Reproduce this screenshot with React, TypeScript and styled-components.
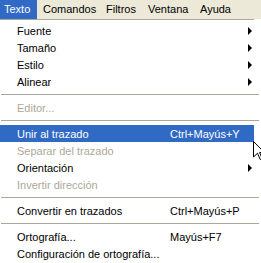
import React from "react";
import styled, { createGlobalStyle } from "styled-components";

const Global = createGlobalStyle`
  html, body { margin: 0; padding: 0; background: #fff; }
  body {
    font-family: Tahoma, "Liberation Sans", Arial, sans-serif;
    font-size: 11px;
    -webkit-font-smoothing: none;
  }
`;

const Screen = styled.div`
  position: relative;
  width: 261px;
  height: 263px;
  overflow: hidden;
  background: #fff;
`;

const MenuBar = styled.div`
  display: flex;
  height: 19px;
  background: #ece9d8;
`;

const BarItem = styled.div<{ $active?: boolean; $w: number }>`
  display: flex;
  align-items: center;
  width: ${(p) => p.$w}px;
  padding-left: ${(p) => (p.$active ? 4 : 6)}px;
  box-sizing: border-box;
  color: ${(p) => (p.$active ? "#fff" : "#000")};
  background: ${(p) => (p.$active ? "#316ac5" : "transparent")};
  line-height: 19px;
  white-space: nowrap;
`;

const Panel = styled.div`
  border-top: 1px solid #aca899;
  padding-top: 2px;
  width: 254px;
`;

const Row = styled.div<{ $hi?: boolean; $off?: boolean }>`
  display: grid;
  grid-template-columns: 152px 1fr 10px;
  align-items: center;
  height: 17px;
  padding-left: 17px;
  color: ${(p) => (p.$hi ? "#fff" : p.$off ? "#aca899" : "#000")};
  background: ${(p) => (p.$hi ? "#316ac5" : "transparent")};
  white-space: nowrap;
`;

const Shortcut = styled.span`
  padding-left: 1px;
`;

const Arrow = styled.span`
  width: 0;
  height: 0;
  border-top: 4px solid transparent;
  border-bottom: 4px solid transparent;
  border-left: 4px solid #000;
  margin-left: 4px;
`;

const Sep = styled.div`
  height: 9px;
  display: flex;
  align-items: center;
  padding-left: 1px;
  width: 258px;
  &::before {
    content: "";
    display: block;
    width: 100%;
    height: 1px;
    background: #aca899;
  }
`;

const Cursor = styled.svg`
  position: absolute;
  left: 253px;
  top: 141px;
`;

type Item =
  | { sep: true }
  | { label: string; shortcut?: string; sub?: boolean; off?: boolean; hi?: boolean; sep?: false };

const items: Item[] = [
  { label: "Fuente", sub: true },
  { label: "Tamaño", sub: true },
  { label: "Estilo", sub: true },
  { label: "Alinear", sub: true },
  { sep: true },
  { label: "Editor...", off: true },
  { sep: true },
  { label: "Unir al trazado", shortcut: "Ctrl+Mayús+Y", hi: true },
  { label: "Separar del trazado", off: true },
  { label: "Orientación", sub: true },
  { label: "Invertir dirección", off: true },
  { sep: true },
  { label: "Convertir en trazados", shortcut: "Ctrl+Mayús+P" },
  { sep: true },
  { label: "Ortografía...", shortcut: "Mayús+F7" },
  { label: "Configuración de ortografía..." },
];

export default function App() {
  return (
    <Screen>
      <Global />
      <MenuBar>
        <BarItem $active $w={37}>Texto</BarItem>
        <BarItem $w={63}>Comandos</BarItem>
        <BarItem $w={42}>Filtros</BarItem>
        <BarItem $w={52}>Ventana</BarItem>
        <BarItem $w={50}>Ayuda</BarItem>
      </MenuBar>
      <Panel>
        {items.map((it, i) =>
          it.sep ? (
            <Sep key={i} />
          ) : (
            <Row key={i} $hi={it.hi} $off={it.off}>
              <span>{it.label}</span>
              <Shortcut>{it.shortcut ?? ""}</Shortcut>
              {it.sub ? <Arrow /> : <span />}
            </Row>
          )
        )}
      </Panel>
      <Cursor width="12" height="20" viewBox="0 0 12 20">
        <polygon
          points="0.5,0.5 0.5,16 4.5,12.2 7.2,18.5 9.2,17.6 6.6,11.5 11.5,11.5"
          fill="#fff"
          stroke="#000"
          strokeWidth="1"
        />
      </Cursor>
    </Screen>
  );
}
